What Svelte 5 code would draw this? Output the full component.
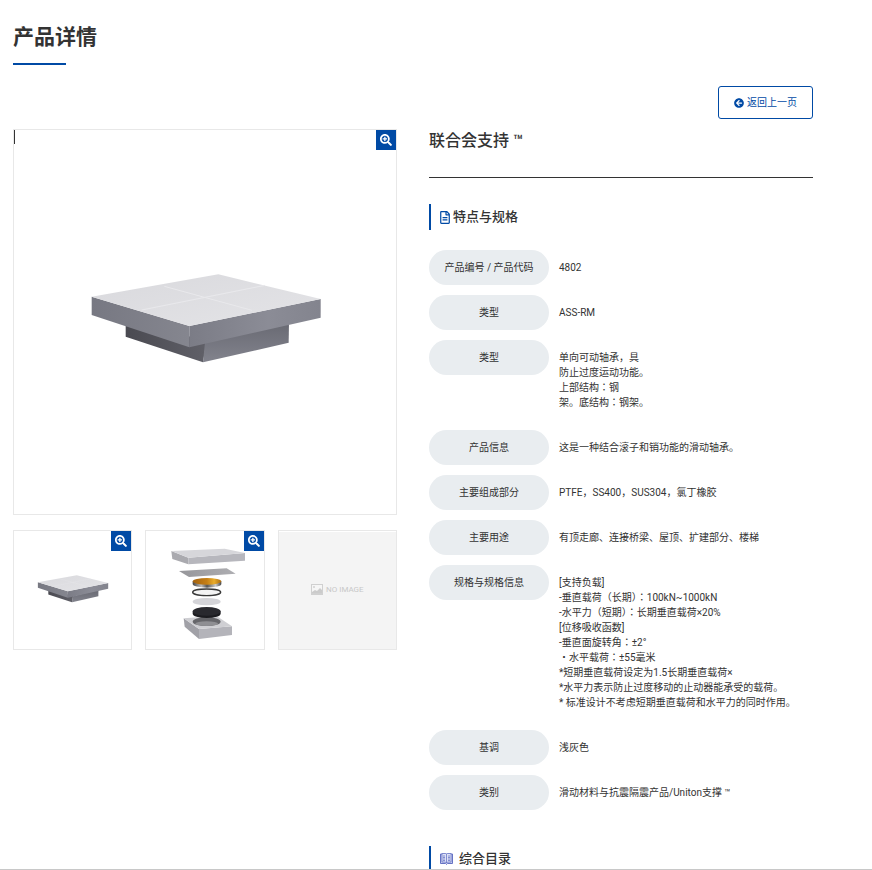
<script lang="ts">
    const specs = [
        { label: "产品编号 / 产品代码", lines: ["4802"] },
        { label: "类型", lines: ["ASS-RM"] },
        { label: "类型", lines: ["单向可动轴承，具", "防止过度运动功能。", "上部结构：钢", "架。底结构：钢架。"] },
        { label: "产品信息", lines: ["这是一种结合滚子和销功能的滑动轴承。"] },
        { label: "主要组成部分", lines: ["PTFE，SS400，SUS304，氯丁橡胶"] },
        { label: "主要用途", lines: ["有顶走廊、连接桥梁、屋顶、扩建部分、楼梯"] },
        {
            label: "规格与规格信息",
            lines: [
                "[支持负载]",
                "-垂直载荷（长期）：100kN~1000kN",
                "-水平力（短期）：长期垂直载荷×20%",
                "[位移吸收函数]",
                "-垂直面旋转角：±2°",
                "・水平载荷：±55毫米",
                "*短期垂直载荷设定为1.5长期垂直载荷×",
                "*水平力表示防止过度移动的止动器能承受的载荷。",
                "* 标准设计不考虑短期垂直载荷和水平力的同时作用。",
            ],
        },
        { label: "基调", lines: ["浅灰色"] },
        { label: "类别", lines: ["滑动材料与抗震隔震产品/Uniton支撑 ™"] },
    ];
</script>

{#snippet zoomIcon()}
    <svg viewBox="0 0 512 512" aria-hidden="true">
        <path d="M304 192v32c0 6.6-5.4 12-12 12h-56v56c0 6.6-5.4 12-12 12h-32c-6.6 0-12-5.4-12-12v-56h-56c-6.6 0-12-5.4-12-12v-32c0-6.6 5.4-12 12-12h56v-56c0-6.6 5.4-12 12-12h32c6.6 0 12 5.4 12 12v56h56c6.6 0 12 5.4 12 12zm201 284.7L476.7 505c-9.4 9.4-24.6 9.4-33.9 0L343 405.3c-4.5-4.5-7-10.6-7-17V372c-35.3 27.6-79.7 44-128 44C93.1 416 0 322.9 0 208S93.1 0 208 0s208 93.1 208 208c0 48.3-16.4 92.7-44 128h16.3c6.4 0 12.5 2.5 17 7l99.7 99.7c9.3 9.4 9.3 24.6 0 34zM344 208c0-75.2-60.8-136-136-136S72 132.8 72 208s60.8 136 136 136 136-60.8 136-136z" />
    </svg>
{/snippet}

{#snippet bearing(id: string)}
    <svg class="picture" viewBox="-168 -375 1146 1152" role="img" aria-label="联合会支持">
        <defs>
            <linearGradient id="{id}-top" x1="0" y1="0" x2="1" y2="1">
                <stop offset="0" stop-color="#d9d9dd" />
                <stop offset="1" stop-color="#e4e4e7" />
            </linearGradient>
            <linearGradient id="{id}-left" x1="0" y1="0" x2="1" y2="0">
                <stop offset="0" stop-color="#777882" />
                <stop offset="1" stop-color="#85868f" />
            </linearGradient>
            <linearGradient id="{id}-right" x1="0" y1="0" x2="1" y2="0">
                <stop offset="0" stop-color="#7b7c86" />
                <stop offset="0.6" stop-color="#8b8c96" />
                <stop offset="1" stop-color="#83848e" />
            </linearGradient>
            <linearGradient id="{id}-base" x1="0" y1="0" x2="0" y2="1">
                <stop offset="0" stop-color="#686972" />
                <stop offset="1" stop-color="#82838d" />
            </linearGradient>
            <linearGradient id="{id}-dark" x1="0" y1="0" x2="1" y2="0">
                <stop offset="0" stop-color="#4a4a51" />
                <stop offset="1" stop-color="#606068" />
            </linearGradient>
        </defs>
        <path d="M167 205L410 255L399 322L167 245Z" fill="url(#{id}-dark)" />
        <path d="M405 262L657 200L656 263L399 322Z" fill="url(#{id}-base)" />
        <path d="M65 125L358 213V277L65 180Z" fill="url(#{id}-left)" />
        <path d="M358 213L752 132V188L358 277Z" fill="url(#{id}-right)" />
        <path d="M65 125L445 58L752 132L358 213Z" fill="url(#{id}-top)" />
        <path d="M215 165L585 91M283 94L546 166" stroke="#e9e9ec" stroke-width="3" fill="none" />
    </svg>
{/snippet}

<main class="page">
    <div class="container">
        <h1>产品详情</h1>

        <div class="toolbar">
            <button type="button" class="back">
                <svg viewBox="0 0 512 512" aria-hidden="true">
                    <path d="M256 504C119 504 8 393 8 256S119 8 256 8s248 111 248 248-111 248-248 248zm28.9-143.6L209.4 288H392c13.3 0 24-10.7 24-24v-16c0-13.3-10.7-24-24-24H209.4l75.5-72.4c9.7-9.3 9.9-24.8.4-34.3l-11-10.9c-9.4-9.4-24.6-9.4-33.9 0L107.7 239c-9.4 9.4-9.4 24.6 0 33.9l132.7 132.7c9.4 9.4 24.6 9.4 33.9 0l11-10.9c9.5-9.5 9.3-25-.4-34.3z" />
                </svg>
                返回上一页
            </button>
        </div>

        <div class="columns">
            <div class="gallery">
                <div class="frame large">
                    <span class="cursor"></span>
                    {@render bearing("main")}
                    <button type="button" class="zoom" aria-label="放大">{@render zoomIcon()}</button>
                </div>

                <div class="thumbs">
                    <div class="frame">
                        {@render bearing("thumb")}
                        <button type="button" class="zoom" aria-label="放大">{@render zoomIcon()}</button>
                    </div>

                    <div class="frame">
                        <!-- exploded view of the bearing -->
                        <svg class="picture" viewBox="18 33 352 354" role="img" aria-label="分解图">
                            <defs>
                                <linearGradient id="gold" x1="0" y1="0" x2="1" y2="0">
                                    <stop offset="0" stop-color="#a3620f" />
                                    <stop offset="0.5" stop-color="#c57f16" />
                                    <stop offset="0.75" stop-color="#e9ad2c" />
                                    <stop offset="1" stop-color="#a8690f" />
                                </linearGradient>
                                <linearGradient id="steel" x1="0" y1="0" x2="1" y2="0">
                                    <stop offset="0" stop-color="#444" />
                                    <stop offset="0.3" stop-color="#bbb" />
                                    <stop offset="0.5" stop-color="#555" />
                                    <stop offset="0.8" stop-color="#ccc" />
                                    <stop offset="1" stop-color="#444" />
                                </linearGradient>
                                <linearGradient id="sheet" x1="0" y1="0" x2="1" y2="0">
                                    <stop offset="0" stop-color="#96969a" />
                                    <stop offset="1" stop-color="#aeaeb2" />
                                </linearGradient>
                            </defs>
                            <path d="M94 93L145 113V133L97 117Z" fill="#aaaaaf" />
                            <path d="M145 113L315 99V122L145 133Z" fill="#b7b7bd" />
                            <path d="M94 93L254 86L315 99L145 113Z" fill="#d6d6da" />
                            <path d="M117 153L260 145L287 161L147 171Z" fill="url(#sheet)" />
                            <path d="M158 184V192A43 11 0 0 0 244 192V184Z" fill="url(#steel)" />
                            <ellipse cx="201" cy="184" rx="43" ry="10" fill="url(#gold)" />
                            <ellipse cx="200" cy="217" rx="42" ry="10" fill="#f4f4f4" stroke="#393939" stroke-width="4" />
                            <ellipse cx="200" cy="245" rx="42" ry="11" fill="#d4d4d8" />
                            <path d="M131 295L177 327V357L134 320Z" fill="#a1a1a7" />
                            <path d="M177 327L276 319V345L177 357Z" fill="#b4b4ba" />
                            <path d="M131 295L230 288L276 319L177 327Z" fill="#cfcfd3" />
                            <ellipse cx="200" cy="305" rx="42" ry="13" fill="#66666a" />
                            <ellipse cx="200" cy="311" rx="34" ry="7" fill="#8f8f93" />
                            <path d="M158 274V281A42 13 0 0 0 242 281V274Z" fill="#1c1c20" />
                            <ellipse cx="200" cy="274" rx="42" ry="13" fill="#29292e" />
                        </svg>
                        <button type="button" class="zoom" aria-label="放大">{@render zoomIcon()}</button>
                    </div>

                    <div class="frame empty">
                        <svg viewBox="0 0 12 11" aria-hidden="true">
                            <path d="M0 0H12V11H0Z" fill="#d0d0d0" />
                            <path d="M1 1H11V9H1Z" fill="#f6f6f6" />
                            <path d="M1 9V8L4 6L6 7L9 4L11 6V9Z" fill="#cbcbcb" />
                            <circle cx="3" cy="3" r="1" fill="#d0d0d0" />
                        </svg>
                        <span>NO IMAGE</span>
                    </div>
                </div>
            </div>

            <div class="details">
                <h2>联合会支持 ™</h2>

                <h3>
                    <svg class="file" viewBox="0 0 384 512" aria-hidden="true">
                        <path d="M288 248v28c0 6.6-5.4 12-12 12H108c-6.6 0-12-5.4-12-12v-28c0-6.6 5.4-12 12-12h168c6.6 0 12 5.4 12 12zm-12 72H108c-6.6 0-12 5.4-12 12v28c0 6.6 5.4 12 12 12h168c6.6 0 12-5.4 12-12v-28c0-6.6-5.4-12-12-12zm108-188.1V464c0 26.5-21.5 48-48 48H48c-26.5 0-48-21.5-48-48V48C0 21.5 21.5 0 48 0h204.1C264.8 0 277 5.1 286 14.1L369.9 98c9 8.9 14.1 21.2 14.1 33.9zm-128-80V128h76.1L256 51.9zM336 464V176H232c-13.3 0-24-10.7-24-24V48H48v416h288z" />
                    </svg>
                    特点与规格
                </h3>

                <dl>
                    {#each specs as spec}
                        <div class="row">
                            <dt>{spec.label}</dt>
                            <dd>
                                {#each spec.lines as line}
                                    <div>{line}</div>
                                {/each}
                            </dd>
                        </div>
                    {/each}
                </dl>

                <h3 class="catalog">
                    <svg class="book" viewBox="0 0 26 24" aria-hidden="true">
                        <path d="M1 2H25V21H15L13 23L11 21H1Z" fill="#c3c9ec" stroke="#6673c4" stroke-width="2" />
                        <path d="M4 1H11L13 3L15 1H22V18H15L13 20L11 18H4Z" fill="#dfe3f7" stroke="#6673c4" stroke-width="1.5" />
                        <path d="M13 3V20M6 6H10M6 9H10M6 12H10M6 15H10M16 6H20M16 9H20M16 12H20M16 15H20" stroke="#6673c4" stroke-width="1.5" fill="none" />
                    </svg>
                    综合目录
                </h3>
            </div>
        </div>
    </div>
</main>

<style>
    :global(body) {
        margin: 0;
        background: #fff;
    }

    .page {
        box-sizing: border-box;
        height: 100vh;
        overflow-y: auto;
        scrollbar-width: none;
        border-bottom: 1px solid #c8c8c8;
        color: #333;
        font-family: Roboto, "Noto Sans CJK JP", sans-serif;
        font-size: 10px;
        line-height: 15px;
    }

    .container {
        max-width: 800px;
        padding: 21px 13px;
    }

    h1,
    h2,
    h3,
    dl,
    dd {
        margin: 0;
    }

    h1 {
        font-size: 21px;
        line-height: 32px;
        font-weight: 700;
    }

    h1::after {
        content: "";
        display: block;
        width: 53px;
        height: 2px;
        margin-top: 10px;
        background: #004aa5;
    }

    .toolbar {
        display: flex;
        justify-content: flex-end;
        margin: 21px 0 10px;
    }

    .back {
        display: flex;
        align-items: center;
        gap: 3px;
        padding: 8px 15px;
        border: 1px solid #004aa5;
        border-radius: 3px;
        background: #fff;
        color: #004aa5;
        font: inherit;
        cursor: pointer;
    }

    .back svg {
        width: 10px;
        height: 10px;
        fill: currentColor;
    }

    .columns {
        display: grid;
        grid-template-columns: 1fr 1fr;
        gap: 32px;
    }

    .frame {
        position: relative;
        border: 1px solid #e8e8e8;
    }

    .picture {
        display: block;
        width: 100%;
    }

    /* text cursor left in the corner of the slider */
    .cursor {
        position: absolute;
        top: 0;
        left: 0;
        width: 1px;
        height: 14px;
        background: #333;
    }

    .zoom {
        position: absolute;
        top: 0;
        right: 0;
        display: flex;
        align-items: center;
        justify-content: center;
        width: 20px;
        height: 20px;
        padding: 0;
        border: 0;
        background: #004aa5;
        cursor: pointer;
    }

    .zoom svg {
        width: 12px;
        height: 12px;
        fill: #fff;
    }

    .thumbs {
        display: grid;
        grid-template-columns: repeat(3, 1fr);
        gap: 13px;
        margin-top: 15px;
    }

    .empty {
        display: flex;
        align-items: center;
        justify-content: center;
        gap: 3px;
        background: #f4f4f4;
        box-shadow: inset 0 1px #fff;
        color: #c8c8c8;
        font-size: 8px;
    }

    .empty svg {
        width: 12px;
        height: 11px;
    }

    h2 {
        padding-bottom: 25px;
        border-bottom: 1px solid #333;
        font-size: 16px;
        line-height: 23px;
        font-weight: 500;
    }

    h3 {
        display: flex;
        align-items: center;
        gap: 3px;
        margin: 26px 0 20px;
        padding-left: 9px;
        border-left: 2px solid #004aa5;
        font-size: 13px;
        line-height: 26px;
        font-weight: 500;
    }

    .file {
        width: 10px;
        height: 13px;
        fill: #004aa5;
    }

    .catalog {
        gap: 6px;
        margin-top: 36px;
    }

    .book {
        width: 13px;
        height: 12px;
    }

    dl {
        display: grid;
        gap: 10px;
    }

    .row {
        display: grid;
        grid-template-columns: 120px 1fr;
        align-items: start;
    }

    dt {
        padding: 10px 0;
        border-radius: 18px;
        background: #e9edf0;
        text-align: center;
    }

    dd {
        padding: 10px 0 10px 10px;
    }
</style>
